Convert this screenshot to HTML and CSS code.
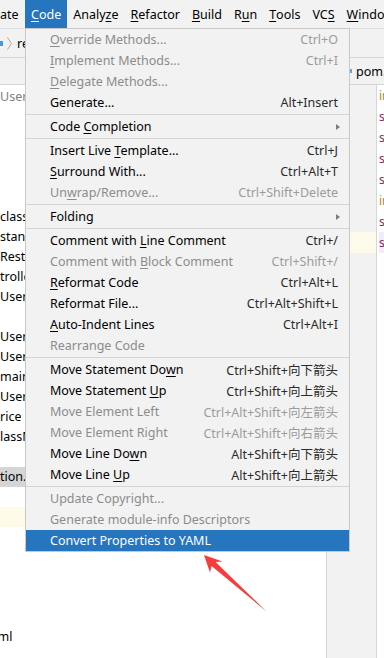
FILE: index.html
```html
<!DOCTYPE html>
<html lang="en">
<head>
<meta charset="utf-8">
<title>Code menu</title>
<link rel="stylesheet" href="styles.css">
</head>
<body>
<div class="menubar">
  <div class="mb-item mb-first">ate</div>
  <div class="mb-item mb-active"><u>C</u>ode</div>
  <div class="mb-item">Analy<u>z</u>e</div>
  <div class="mb-item"><u>R</u>efactor</div>
  <div class="mb-item"><u>B</u>uild</div>
  <div class="mb-item">R<u>u</u>n</div>
  <div class="mb-item"><u>T</u>ools</div>
  <div class="mb-item">VC<u>S</u></div>
  <div class="mb-item"><u>W</u>indow</div>
</div>
<div class="navbar">
  <span class="nav-ico"></span>
  <svg class="nav-chev" width="5" height="13" viewBox="0 0 5 13"><path d="M0.5 0.5 L4.5 6.5 L0.5 12.5" fill="none" stroke="#a8a8a8" stroke-width="1"/></svg>
  <span class="nav-text">re</span>
</div>
<div class="work">
  <div class="project">
    <div class="proj-head"></div>
    <div class="tree">
      <div class="row dim"><span class="frag">Users</span></div>
      <div class="row"></div>
      <div class="row"></div>
      <div class="row"></div>
      <div class="row"></div>
      <div class="row"></div>
      <div class="row"><span class="frag">class</span></div>
      <div class="row"><span class="frag">stant</span></div>
      <div class="row"><span class="frag">RestI</span></div>
      <div class="row"><span class="frag">trolle</span></div>
      <div class="row"><span class="frag">UserC</span></div>
      <div class="row"></div>
      <div class="row"><span class="frag">UserD</span></div>
      <div class="row"><span class="frag">UserD</span></div>
      <div class="row"><span class="frag">main</span></div>
      <div class="row"><span class="frag">User</span></div>
      <div class="row"><span class="frag">rice</span></div>
      <div class="row"><span class="frag">lassM</span></div>
      <div class="row"></div>
      <div class="row selected"><span class="frag">tion.</span></div>
      <div class="row"></div>
      <div class="row marked"></div>
      <div class="row"></div>
      <div class="row"></div>
      <div class="row"></div>
      <div class="row"></div>
      <div class="row"></div>
      <div class="row cut"><span class="frag">xml</span></div>
    </div>
  </div>
  <div class="editor">
    <div class="tabs"><span class="tab-ico"></span><span class="tab">pom.xml</span></div>
    <div class="code">
      <div class="gutter">
        <div class="gline"></div><div class="gline"></div><div class="gline"></div><div class="gline"></div>
        <div class="gline"></div><div class="gline"></div><div class="gline"></div><div class="gline caret"></div>
      </div>
      <div class="text">
        <div class="line k1">info.app.name=demo</div>
        <div class="line k2">server.port=8080</div>
        <div class="line k2">spring.datasource.url=jdbc</div>
        <div class="line k2">spring.datasource.username=root</div>
        <div class="line k2">spring.datasource.password=root</div>
        <div class="line k1">info.app.version=1.0</div>
        <div class="line k2">spring.jpa.show-sql=true</div>
        <div class="line k2 caret">spring.jpa.hibernate.ddl-auto=update</div>
      </div>
    </div>
  </div>
</div>

<div class="menu">
  <div class="mi dis"><span class="lbl"><u>O</u>verride Methods...</span><span class="sc">Ctrl+O</span></div>
  <div class="mi dis"><span class="lbl"><u>I</u>mplement Methods...</span><span class="sc">Ctrl+I</span></div>
  <div class="mi dis"><span class="lbl"><u>D</u>elegate Methods...</span></div>
  <div class="mi"><span class="lbl">Generate...</span><span class="sc">Alt+Insert</span></div>
  <div class="sep"></div>
  <div class="mi"><span class="lbl">Code <u>C</u>ompletion</span><span class="sub"></span></div>
  <div class="sep"></div>
  <div class="mi"><span class="lbl">Insert Live <u>T</u>emplate...</span><span class="sc">Ctrl+J</span></div>
  <div class="mi"><span class="lbl"><u>S</u>urround With...</span><span class="sc">Ctrl+Alt+T</span></div>
  <div class="mi dis"><span class="lbl">Un<u>w</u>rap/Remove...</span><span class="sc">Ctrl+Shift+Delete</span></div>
  <div class="sep"></div>
  <div class="mi"><span class="lbl">Folding</span><span class="sub"></span></div>
  <div class="sep"></div>
  <div class="mi"><span class="lbl">Comment with <u>L</u>ine Comment</span><span class="sc">Ctrl+/</span></div>
  <div class="mi dis"><span class="lbl">Comment with <u>B</u>lock Comment</span><span class="sc">Ctrl+Shift+/</span></div>
  <div class="mi"><span class="lbl"><u>R</u>eformat Code</span><span class="sc">Ctrl+Alt+L</span></div>
  <div class="mi"><span class="lbl">Reformat File...</span><span class="sc">Ctrl+Alt+Shift+L</span></div>
  <div class="mi"><span class="lbl"><u>A</u>uto-Indent Lines</span><span class="sc">Ctrl+Alt+I</span></div>
  <div class="mi dis"><span class="lbl">Rearrange Code</span></div>
  <div class="sep"></div>
  <div class="mi"><span class="lbl">Move Statement Do<u>w</u>n</span><span class="sc">Ctrl+Shift+向下箭头</span></div>
  <div class="mi"><span class="lbl">Move Statement <u>U</u>p</span><span class="sc">Ctrl+Shift+向上箭头</span></div>
  <div class="mi dis"><span class="lbl">Move Element Left</span><span class="sc">Ctrl+Alt+Shift+向左箭头</span></div>
  <div class="mi dis"><span class="lbl">Move Element Right</span><span class="sc">Ctrl+Alt+Shift+向右箭头</span></div>
  <div class="mi"><span class="lbl">Move Line Do<u>w</u>n</span><span class="sc">Alt+Shift+向下箭头</span></div>
  <div class="mi"><span class="lbl">Move Line <u>U</u>p</span><span class="sc">Alt+Shift+向上箭头</span></div>
  <div class="sep"></div>
  <div class="mi dis"><span class="lbl">Update Copyright...</span></div>
  <div class="mi dis"><span class="lbl">Generate module-info Descriptors</span></div>
  <div class="mi active"><span class="lbl">Convert Properties to YAML</span></div>
</div>

<svg class="arrow" width="384" height="658" viewBox="0 0 384 658">
  <path d="M204 555 L222.5 561.5 L215.6 562 L266.5 611.5 L211.6 566 L210 572.5 Z" fill="#f63c3c"/>
</svg>
</body>
</html>
```
FILE: styles.css
```css
* { box-sizing: border-box; }
html, body { margin: 0; padding: 0; }
body {
  width: 384px;
  height: 658px;
  overflow: hidden;
  position: relative;
  background: #ffffff;
  font-family: "Noto Sans", "Noto Sans CJK SC", sans-serif;
  font-size: 12.5px;
  color: #000000;
}
u { text-decoration-thickness: 1px; text-underline-offset: 2px; }

/* menu bar */
.menubar {
  height: 28px;
  background: #f2f2f2;
  display: flex;
  white-space: nowrap;
  overflow: hidden;
}
.mb-item { padding: 0 6px; display: flex; align-items: center; }
.mb-first { width: 25px; flex: none; padding: 0; overflow: hidden; }
.mb-active { background: #2675bf; color: #ffffff; }

/* navigation bar */
.navbar {
  height: 30px;
  background: #f2f2f2;
  border-top: 1px solid #e1e1e1;
  border-bottom: 1px solid #d6d6d6;
  display: flex;
  align-items: center;
  white-space: nowrap;
  overflow: hidden;
}
.nav-ico { width: 3px; height: 5px; background: #3f9be0; flex: none; }
.nav-chev { margin-left: 4px; flex: none; }
.nav-text { margin-left: 5px; }

/* work area */
.work { display: flex; height: 600px; }
.project {
  width: 327px;
  flex: none;
  border-right: 1px solid #d6d6d6;
  display: flex;
  flex-direction: column;
  overflow: hidden;
}
.proj-head { height: 27px; flex: none; background: #f2f2f2; border-bottom: 1px solid #d6d6d6; }
.tree { padding-top: 2px; }
.row { height: 20px; line-height: 20px; white-space: nowrap; overflow: hidden; }
.frag { display: inline-block; max-width: 26px; overflow: hidden; vertical-align: top; }
.row.dim { color: #808080; }
.row.selected { background: #d5d5d5; }
.row.marked { background: #fdfbe7; }
.row.cut .frag { margin-left: -9px; max-width: 30px; }

.editor { flex: 1; display: flex; flex-direction: column; overflow: hidden; }
.tabs {
  height: 27px;
  flex: none;
  background: #f2f2f2;
  border-bottom: 1px solid #d6d6d6;
  display: flex;
  align-items: center;
  white-space: nowrap;
}
.tab-ico { width: 2px; height: 4px; background: #5aa7e0; margin-left: 23px; flex: none; }
.tab { margin-left: 4px; }
.code { flex: 1; display: flex; }
.gutter { width: 50px; flex: none; background: #f2f2f2; border-right: 1px solid #d6d6d6; }
.gline { height: 21px; }
.gline.caret { background: #fcfae9; }
.text { flex: 1; padding-left: 2px; overflow: hidden; }
.line { height: 21px; line-height: 21px; white-space: nowrap; font-size: 12px; }
.line.k1 { color: #a88a2e; }
.line.k2 { color: #8b2a5c; }
.line.caret { background: #efedfb; }

/* dropdown menu */
.menu {
  position: absolute;
  left: 25px;
  top: 28px;
  width: 325px;
  background: #f2f2f2;
  border: 1px solid #c8c8c8;
  white-space: nowrap;
}
.mi {
  height: 21px;
  display: flex;
  align-items: center;
  justify-content: space-between;
  padding: 0 11px 0 24px;
}
.mi .sc { color: #2b2b2b; }
.mi.dis .lbl { color: #8c8c8c; }
.mi.dis .sc { color: #9c9c9c; }
.mi.active { background: #2675bf; color: #ffffff; }
.sub {
  width: 0;
  height: 0;
  border-left: 4px solid #7c7c7c;
  border-top: 3.5px solid transparent;
  border-bottom: 3.5px solid transparent;
  margin-right: -2px;
}
.sep { height: 1px; margin: 1px 0; background: #d4d4d4; }

.arrow { position: absolute; left: 0; top: 0; pointer-events: none; }
```
